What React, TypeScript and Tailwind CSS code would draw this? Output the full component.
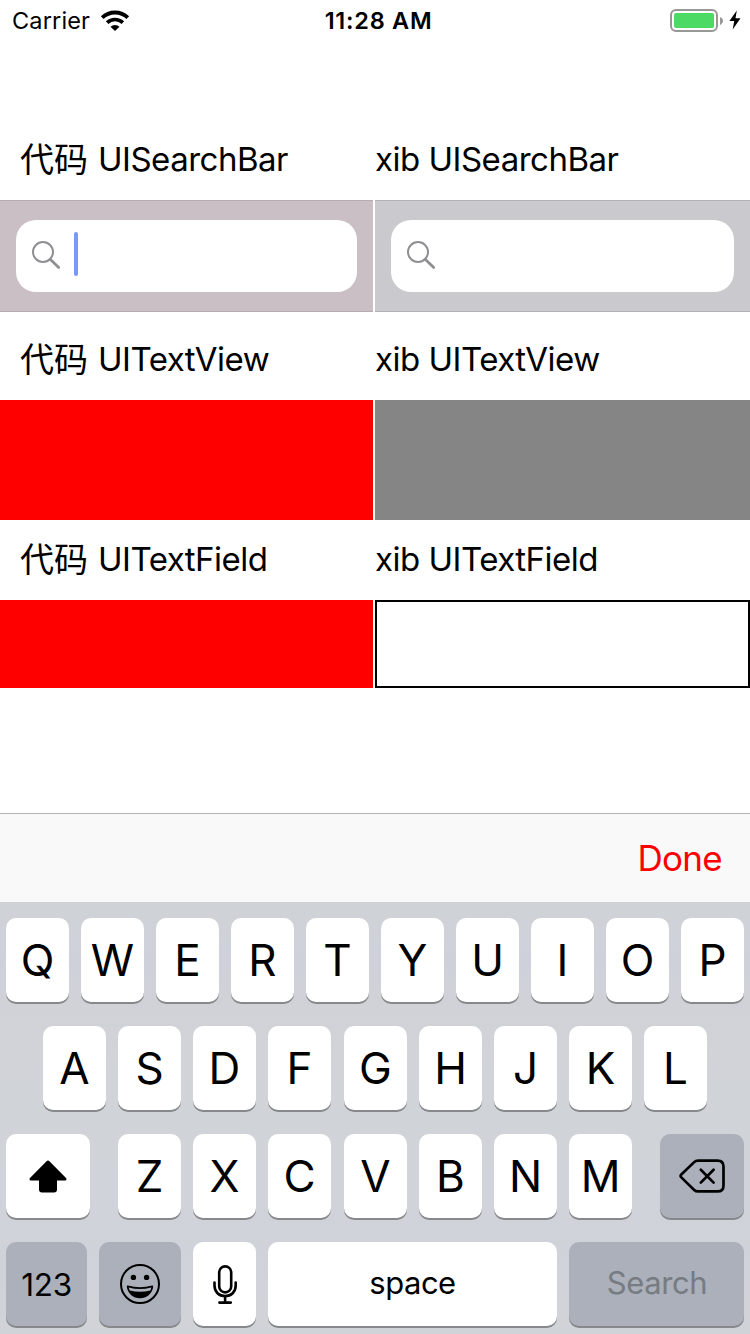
import type { ReactNode } from "react";

function StatusBar() {
  return (
    <header className="flex h-10 items-center pl-[12px] pr-[9px] pt-px">
      <div className="flex flex-1 items-center gap-[10px]">
        <span className="text-[23.5px] leading-none tracking-[0.15px]">Carrier</span>
        <svg width="30" height="22" viewBox="0 0 30 22" fill="none" stroke="#000">
          <path d="M2.2 7.6A18.6 18.6 0 0 1 27.8 7.6" strokeWidth="3.9" />
          <path d="M7.1 12.6A11.6 11.6 0 0 1 22.9 12.6" strokeWidth="3.7" />
          <path d="M10.5 16.7A6.6 6.6 0 0 1 19.5 16.7L15 21Z" fill="#000" stroke="none" />
        </svg>
      </div>
      <span className="pl-[4px] text-[23.5px] font-semibold leading-none tracking-[0.75px]">11:28 AM</span>
      <div className="flex flex-1 items-center justify-end">
        <div className="flex h-[23px] w-12 rounded-[6px] border-2 border-[#979797] p-[2px]">
          <div className="flex-1 rounded-[2px] bg-[#4cd964]" />
        </div>
        <svg className="ml-[2px]" width="3" height="8" viewBox="0 0 3 8">
          <path d="M0 0C1.8.8 3 2.2 3 4S1.8 7.2 0 8Z" fill="#979797" />
        </svg>
        <svg className="mb-px ml-[6px]" width="12" height="20" viewBox="0 0 12 20">
          <path d="M7.8.6L.4 11.1H5.2L3.7 19.4L11.5 8.2H6.5Z" fill="#000" />
        </svg>
      </div>
    </header>
  );
}

function Labels({ name }: { name: string }) {
  return (
    <div className="flex h-20 items-center pb-[2px] text-[33px] leading-none tracking-[-0.5px]">
      <div className="flex w-[375px] items-center pl-5">
        <span className="mr-[10px] pb-[2px] font-['Noto_Sans_CJK_SC',sans-serif] text-[34px] leading-none tracking-normal">代码</span>
        <span className="whitespace-nowrap">{name}</span>
      </div>
      <span className="whitespace-nowrap">xib {name}</span>
    </div>
  );
}

function SearchBox({ focused = false }: { focused?: boolean }) {
  return (
    <div className="flex h-[72px] flex-1 items-center rounded-[20px] bg-white pb-1 pl-[15px]">
      <svg className="mt-[2px]" width="30" height="30" viewBox="0 0 30 30" fill="none" stroke="#8e8e93">
        <circle cx="12" cy="12" r="10" strokeWidth="2" />
        <path d="M19.2 19.2L27.7 27.5" strokeWidth="2.7" strokeLinecap="round" />
      </svg>
      {focused && <div className="ml-[13px] h-11 w-1 rounded-[2px] bg-[#7c98f6]" />}
    </div>
  );
}

function Key({ children, className = "w-[63px]", dark = false }: { children: ReactNode; className?: string; dark?: boolean }) {
  return (
    <div
      className={`flex h-[84px] shrink-0 items-center justify-center rounded-[10px] shadow-[0_2px_0_#86888b] ${
        dark ? "bg-[#abb0ba]" : "bg-white"
      } ${className}`}
    >
      {children}
    </div>
  );
}

function Letters({ letters }: { letters: string }) {
  return (
    <div className="flex gap-3">
      {letters.split("").map((l) => (
        <Key key={l}>
          <span className="text-[44px] leading-none">{l}</span>
        </Key>
      ))}
    </div>
  );
}

function Keyboard() {
  return (
    <section className="flex h-[432px] flex-col gap-6 bg-[linear-gradient(180deg,#cfd3d6_0%,#ced1da_13%,#d1d2d7_26%,#d0d4d8_50%,#d0d2da_80%,#d0d3d7_100%)] px-[6px] pt-4">
      <Letters letters="QWERTYUIOP" />
      <div className="flex gap-[13px] pl-[37px]">
        <Letters letters="ASDF" />
        <Letters letters="GHJKL" />
      </div>
      <div className="flex justify-between">
        <Key className="w-[84px]">
          <svg width="38" height="33" viewBox="0 0 38 33">
            <path d="M17.8 1Q19 0 20.2 1L37 18Q38.4 20.5 36 20.5H28V29.5Q28 32.5 25 32.5H13Q10 32.5 10 29.5V20.5H2Q-.4 20.5 1 18Z" />
          </svg>
        </Key>
        <div className="flex gap-[13px]">
          <Letters letters="ZXC" />
          <Letters letters="VBNM" />
        </div>
        <Key className="w-[84px]" dark>
          <svg width="46" height="34" viewBox="0 0 46 34" fill="none" stroke="#000" strokeWidth="2.7" strokeLinejoin="round" strokeLinecap="round">
            <path d="M19 1.6H38.5Q44.5 1.6 44.5 7.6V26.4Q44.5 32.4 38.5 32.4H19Q16.8 32.4 15.2 30.9L2.3 18.4Q.8 17 2.3 15.6L15.2 3.1Q16.8 1.6 19 1.6Z" />
            <path d="M21.8 10.8L34.6 23.6M34.6 10.8L21.8 23.6" />
          </svg>
        </Key>
      </div>
      <div className="flex gap-3">
        <Key className="w-[81px] pt-[2px]" dark>
          <span className="text-[31.5px] leading-none tracking-[-0.3px]">123</span>
        </Key>
        <Key className="w-[82px]" dark>
          <svg width="40" height="40" viewBox="0 0 40 40">
            <circle cx="20" cy="20" r="19" fill="none" stroke="#000" strokeWidth="2" />
            <circle cx="13.4" cy="13.4" r="2.7" />
            <circle cx="26.6" cy="13.4" r="2.7" />
            <path d="M8 21.6Q20 25 32 21.6Q33.4 21.5 33.2 23C32 29.8 26.8 34.2 20 34.2S8 29.8 6.8 23Q6.6 21.5 8 21.6Z" />
            <path d="M8.8 23.5Q20 26.5 31.2 23.5C31 24.7 30.7 25.7 30.3 26.6Q20 29 9.7 26.6C9.3 25.7 9 24.7 8.8 23.5Z" fill="#abb0ba" />
          </svg>
        </Key>
        <Key>
          <svg width="24" height="39" viewBox="0 0 24 39" fill="none" stroke="#000" strokeWidth="2.6" strokeLinecap="round">
            <rect x="6.2" y="1.4" width="12" height="26" rx="6" />
            <path d="M1.5 17.5V20.5C1.5 27 6 31 12.1 31S22.7 27 22.7 20.5V17.5M12.1 31V37.5M6.4 37.6H17.8" />
          </svg>
        </Key>
        <Key className="w-[289px] pb-[3px]">
          <span className="text-[31px] leading-none tracking-[-0.5px]">space</span>
        </Key>
        <Key className="w-[175px] pb-[3px]" dark>
          <span className="pl-px text-[31px] leading-none tracking-[-0.4px] text-[#777b82]">Search</span>
        </Key>
      </div>
    </section>
  );
}

export default function App() {
  return (
    <div className="flex h-[1334px] w-[750px] flex-col overflow-hidden bg-white font-['Inter','Noto_Sans_CJK_SC',sans-serif] text-black">
      <StatusBar />
      <main className="flex flex-1 flex-col pt-20">
        <Labels name="UISearchBar" />
        <div className="flex h-28 gap-[2px]">
          <div className="flex w-[373px] items-center border-y border-[#b5adb0] bg-[#c9bfc5] px-4">
            <SearchBox focused />
          </div>
          <div className="flex flex-1 items-center border-y border-[#b2b2b4] bg-[#c9c9ce] px-4">
            <SearchBox />
          </div>
        </div>
        <div className="h-2" />
        <Labels name="UITextView" />
        <div className="flex h-[120px] gap-[2px]">
          <div className="w-[373px] bg-[#ff0000]" />
          <div className="flex-1 bg-[#858585]" />
        </div>
        <Labels name="UITextField" />
        <div className="flex h-[88px] gap-[2px]">
          <div className="w-[373px] bg-[#ff0000]" />
          <div className="flex-1 border-2 border-black" />
        </div>
      </main>
      <div className="flex h-[89px] items-center justify-end border-t border-[#b2b2b2] bg-[#f9f9f9] pr-[28px]">
        <span className="text-[35px] leading-none tracking-[-0.7px] text-[#ff0000]">Done</span>
      </div>
      <Keyboard />
    </div>
  );
}
